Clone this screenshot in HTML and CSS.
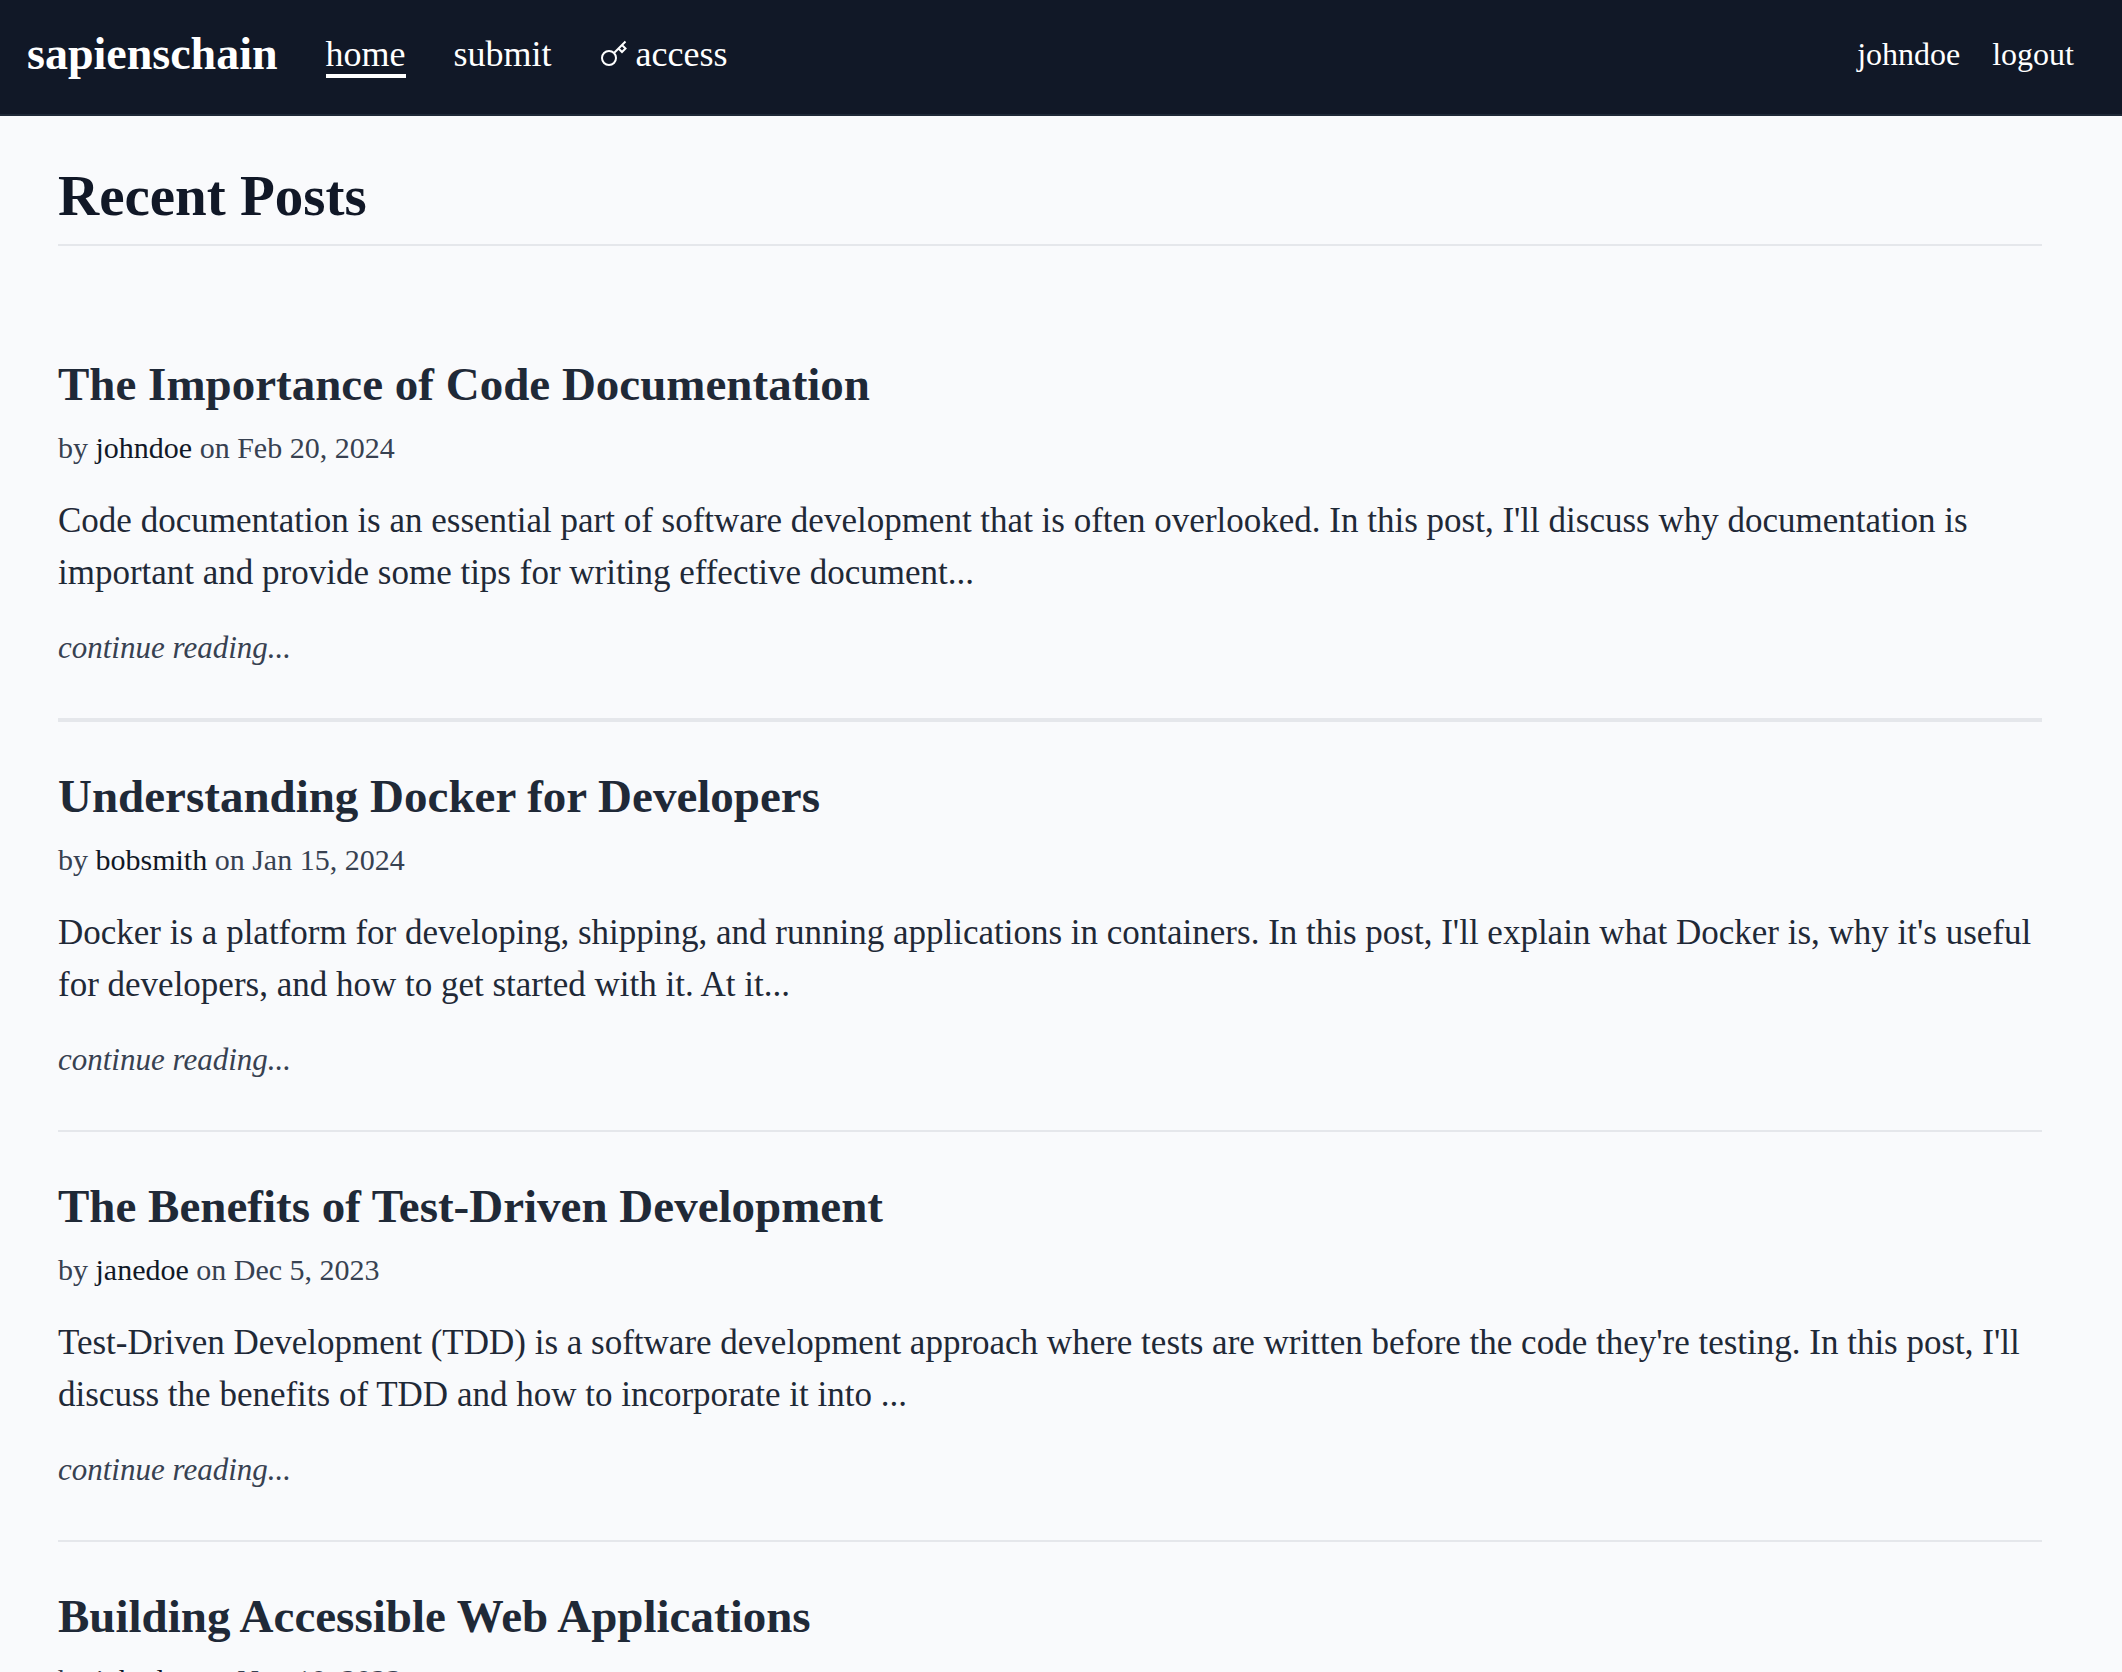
FILE: index.html
```html
<!DOCTYPE html>
<html lang="en">
<head>
<meta charset="UTF-8">
<meta name="viewport" content="width=device-width, initial-scale=1.0">
<title>sapienschain</title>
<link rel="stylesheet" href="styles.css">
</head>
<body>

<header class="site-header">
  <a class="brand" href="#">sapienschain</a>
  <nav class="nav">
    <a class="nav-link active" href="#">home</a>
    <a class="nav-link" href="#">submit</a>
    <a class="nav-link" href="#">
      <svg class="key-icon" viewBox="0 0 28 28" aria-hidden="true">
        <circle cx="9" cy="18" r="7"/>
        <path d="M14 13L25.5 1.5M18.5 8.500L22 12L25.5 8.5L22 5"/>
      </svg>
      access
    </a>
  </nav>
  <nav class="user-nav">
    <a class="user-link" href="#">johndoe</a>
    <a class="user-link" href="#">logout</a>
  </nav>
</header>

<main class="content">
  <h1 class="page-title">Recent Posts</h1>

  <div class="posts">
    <article class="post featured">
      <h2 class="post-title"><a href="#">The Importance of Code Documentation</a></h2>
      <p class="meta">by <a href="#">johndoe</a> on Feb 20, 2024</p>
      <p class="excerpt">Code documentation is an essential part of software development that is often overlooked. In this post, I'll discuss why documentation is important and provide some tips for writing effective document...</p>
      <a class="read-more" href="#">continue reading...</a>
    </article>

    <article class="post">
      <h2 class="post-title"><a href="#">Understanding Docker for Developers</a></h2>
      <p class="meta">by <a href="#">bobsmith</a> on Jan 15, 2024</p>
      <p class="excerpt">Docker is a platform for developing, shipping, and running applications in containers. In this post, I'll explain what Docker is, why it's useful for developers, and how to get started with it. At it...</p>
      <a class="read-more" href="#">continue reading...</a>
    </article>

    <article class="post">
      <h2 class="post-title"><a href="#">The Benefits of Test-Driven Development</a></h2>
      <p class="meta">by <a href="#">janedoe</a> on Dec 5, 2023</p>
      <p class="excerpt">Test-Driven Development (TDD) is a software development approach where tests are written before the code they're testing. In this post, I'll discuss the benefits of TDD and how to incorporate it into ...</p>
      <a class="read-more" href="#">continue reading...</a>
    </article>

    <article class="post">
      <h2 class="post-title"><a href="#">Building Accessible Web Applications</a></h2>
      <p class="meta">by <a href="#">johndoe</a> on Nov 10, 2023</p>
    </article>
  </div>
</main>

</body>
</html>
```
FILE: styles.css
```css
html, body {
  margin: 0;
  height: 100%;
  overflow: hidden;
}

body {
  background: #f9fafc;
  color: #1f2937;
  font-family: "Liberation Serif", serif;
  font-size: 35px;
  line-height: 52px;
}

a {
  color: inherit;
  text-decoration: none;
}

/* header */
.site-header {
  display: flex;
  align-items: center;
  height: 108px;
  padding: 0 48px 6px 27px;
  background: #111827;
  border-bottom: 2px solid #1f2937;
  color: #fff;
}

.brand {
  font-size: 46px;
  font-weight: bold;
}

.nav {
  display: flex;
  gap: 48px;
  margin: 4px 0 0 48px;
  font-size: 36px;
}

.nav-link {
  display: flex;
  align-items: center;
  gap: 8px;
  line-height: 40px;
  border-bottom: 4px solid transparent;
}

.nav-link.active {
  border-color: #fff;
}

.key-icon {
  width: 28px;
  height: 28px;
  fill: none;
  stroke: #fff;
  stroke-width: 2;
}

.user-nav {
  display: flex;
  gap: 32px;
  margin-left: auto;
  font-size: 32px;
}

/* content */
.content {
  padding: 48px 80px 0 58px;
}

.page-title {
  margin: 0;
  padding-bottom: 16px;
  border-bottom: 2px solid #e5e7eb;
  color: #111827;
  font-size: 57px;
  line-height: 64px;
}

.posts {
  margin-top: 64px;
}

.post {
  padding: 48px 0;
  border-bottom: 2px solid #e5e7eb;
}

.post.featured {
  border-bottom-width: 4px;
}

.post-title {
  margin: 0 0 16px;
  font-size: 47px;
  line-height: 52px;
}

.meta {
  margin: 0 0 25px;
  color: #374151;
  font-size: 30px;
  line-height: 44px;
}

.meta a {
  color: #111827;
}

.excerpt {
  margin: 0 0 27px;
}

.read-more {
  display: block;
  color: #374151;
  font-size: 31px;
  font-style: italic;
  line-height: 44px;
}
```
